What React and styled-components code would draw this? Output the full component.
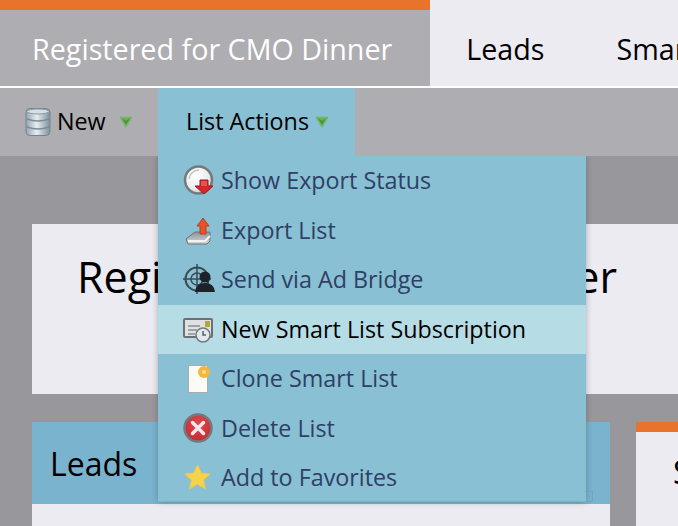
import React from "react";
import styled, { createGlobalStyle } from "styled-components";

const GlobalStyle = createGlobalStyle`
  html, body {
    margin: 0;
    padding: 0;
    background: #98979b;
  }
  * {
    box-sizing: border-box;
  }
`;

const Page = styled.div`
  position: relative;
  width: 678px;
  height: 526px;
  overflow: hidden;
  background: #98979b;
  font-family: "Open Sans", "Noto Sans", sans-serif;
  color: #000;
`;

const TabBar = styled.div`
  display: flex;
  height: 88px;
  background: #ecebf2;
  border-bottom: 2px solid #fff;
  white-space: nowrap;
`;

const Tab = styled.div`
  flex: none;
  height: 86px;
  display: flex;
  align-items: center;
  font-size: 28.7px;
  padding: ${(p) => (p.$active ? "0 38px 0 32px" : "0 36px")};
  background: ${(p) => (p.$active ? "#aeadb1" : "transparent")};
  border-top: 10px solid ${(p) => (p.$active ? "#e8732a" : "transparent")};
  color: ${(p) => (p.$active ? "#fff" : "#000")};
`;

const Toolbar = styled.div`
  display: flex;
  height: 68px;
  background: #aeadb1;
`;

const ToolButton = styled.div`
  display: flex;
  align-items: center;
  height: 68px;
  font-size: 23.3px;
  width: ${(p) => p.$width}px;
  padding-left: ${(p) => p.$pad}px;
  background: ${(p) => (p.$open ? "#89c0d3" : "transparent")};
`;

const ToolLabel = styled.span`
  margin-left: ${(p) => p.$left || 0}px;
  margin-right: ${(p) => p.$right}px;
  position: relative;
  top: -1px;
`;

const Content = styled.div`
  padding: 68px 0 0 32px;
`;

const HeaderCard = styled.div`
  height: 170px;
  background: #ecebf2;
  padding: 22px 0 0 45px;
  font-size: 43px;
  line-height: 62px;
  white-space: nowrap;
`;

const PanelRow = styled.div`
  display: flex;
  gap: 26px;
  margin-top: 28px;
`;

const LeadsPanel = styled.div`
  flex: none;
  width: 578px;
  height: 110px;
  background: #ecebf2;
`;

const LeadsHead = styled.div`
  height: 82px;
  background: #7ab3ce;
  padding-left: 18px;
  display: flex;
  align-items: center;
  font-size: 32px;
`;

const SidePanel = styled.div`
  flex: 1;
  min-width: 0;
  height: 110px;
  background: #ecebf2;
  border-top: 10px solid #e8732a;
  padding: 18px 0 0 37px;
  font-size: 32px;
  white-space: nowrap;
  overflow: hidden;
`;

const Menu = styled.div`
  position: absolute;
  left: 158px;
  top: 156px;
  width: 428px;
  height: 346px;
  background: #89c0d3;
  border-bottom: 1px solid #7eb2c8;
  box-shadow: 0 0 6px rgba(40, 50, 60, 0.35);
  clip-path: inset(0 -10px -10px -10px);

  &::after {
    content: "";
    position: absolute;
    right: -7px;
    bottom: -1px;
    width: 7px;
    height: 9px;
    border: 1px solid rgba(110, 160, 190, 0.8);
    border-left: 0;
  }
`;

const MenuItem = styled.div`
  display: flex;
  align-items: center;
  height: 49.5px;
  padding: 0 0 1px 25px;
  font-size: 23.3px;
  color: ${(p) => (p.$hover ? "#000" : "#2f3f66")};
  background: ${(p) => (p.$hover ? "#b6dde5" : "transparent")};
`;

const IconSlot = styled.span`
  flex: none;
  display: flex;
  width: 32px;
  height: 32px;
  margin: 2px 6px 0 0;
`;

const Arrow = () => (
  <svg width="14" height="12" viewBox="0 0 14 12">
    <path d="M1.500 1.500h11L7 10.500z" fill="#4a9636" stroke="#74b565" strokeWidth="1.500" strokeLinejoin="round" />
    <path d="M3 2h8L7 5z" fill="#6db05c" />
  </svg>
);

const DatabaseIcon = () => (
  <svg width="26" height="30" viewBox="0 0 26 30">
    <defs>
      <linearGradient id="db" x1="0" x2="1" y1="0" y2="0">
        <stop offset="0" stopColor="#93a4b0" />
        <stop offset="0.45" stopColor="#e6edf1" />
        <stop offset="1" stopColor="#7d8f9c" />
      </linearGradient>
    </defs>
    <rect x="1" y="1.500" width="24" height="27" rx="4" fill="url(#db)" stroke="#75848f" />
    <ellipse cx="13" cy="4.500" rx="11" ry="2.500" fill="#d6dfe4" stroke="#8a98a2" />
    <path d="M2 12q11 4 22 0M2 20q11 4 22 0" fill="none" stroke="#7d8b96" strokeWidth="1.500" />
  </svg>
);

const ExportStatusIcon = () => (
  <svg width="32" height="32" viewBox="0 0 32 32">
    <defs>
      <radialGradient id="disc" cx="0.4" cy="0.35" r="0.7">
        <stop offset="0" stopColor="#ffffff" />
        <stop offset="0.7" stopColor="#ececec" />
        <stop offset="1" stopColor="#b9bbbd" />
      </radialGradient>
    </defs>
    <circle cx="15.500" cy="15" r="13.500" fill="url(#disc)" stroke="#77797c" strokeWidth="2.500" />
    <path d="M6 14a10 10 0 0 1 10-9" fill="none" stroke="#c2c2c2" strokeWidth="1.500" />
    <path d="M17 15h8v6h5l-9 8-9-8h5z" fill="#d5272c" stroke="#a01a1e" strokeLinejoin="round" />
    <path d="M18 16h6v5h-6z" fill="#e9524f" />
  </svg>
);

const ExportListIcon = () => (
  <svg width="32" height="32" viewBox="0 0 32 32">
    <defs>
      <linearGradient id="tray" x1="0" x2="0" y1="0" y2="1">
        <stop offset="0" stopColor="#8c9297" />
        <stop offset="1" stopColor="#d6d9db" />
      </linearGradient>
    </defs>
    <path d="M3 24l9-7h15v9l-3 3H5z" fill="url(#tray)" stroke="#6f7478" />
    <path d="M5 26h17l5-5" fill="none" stroke="#f2f2f2" strokeWidth="2" />
    <path d="M20 3l6 8h-3v8h-6v-8h-3z" fill="#e8522b" stroke="#bb3f1d" strokeLinejoin="round" />
  </svg>
);

const AdBridgeIcon = () => (
  <svg width="32" height="32" viewBox="0 0 32 32">
    <circle cx="14" cy="15" r="11.500" fill="none" stroke="#3a4a50" strokeWidth="2" />
    <circle cx="14" cy="15" r="6" fill="none" stroke="#3a4a50" strokeWidth="1.500" />
    <path d="M14 0v30M0 15h28" stroke="#3a4a50" strokeWidth="1.500" />
    <circle cx="22" cy="13" r="5.500" fill="#1c2228" />
    <path d="M12 28q1-9 10-9t10 9z" fill="#1c2228" />
  </svg>
);

const SubscriptionIcon = () => (
  <svg width="32" height="32" viewBox="0 0 32 32">
    <rect x="1" y="5" width="28" height="18" rx="1" fill="#dfe1e2" stroke="#6d6f72" strokeWidth="2" />
    <rect x="22" y="7" width="5" height="6" fill="#b3a83f" />
    <path d="M5 12h12M5 16h9M5 20h7" stroke="#8d9093" strokeWidth="1.500" />
    <circle cx="20" cy="21" r="7" fill="#e2e8ec" stroke="#6f7a82" strokeWidth="1.500" />
    <path d="M20 17v4h3" fill="none" stroke="#56616a" strokeWidth="1.500" />
  </svg>
);

const CloneIcon = () => (
  <svg width="32" height="32" viewBox="0 0 32 32">
    <rect x="5.500" y="2.500" width="19" height="27" fill="#fbfbf6" stroke="#a9adae" />
    <circle cx="21" cy="9" r="6" fill="#f3b73d" />
    <circle cx="21" cy="9" r="2" fill="#f8dc94" />
  </svg>
);

const DeleteIcon = () => (
  <svg width="32" height="32" viewBox="0 0 32 32">
    <defs>
      <radialGradient id="red" cx="0.5" cy="0.35" r="0.7">
        <stop offset="0" stopColor="#e4474c" />
        <stop offset="1" stopColor="#bf2a31" />
      </radialGradient>
    </defs>
    <circle cx="15" cy="15" r="13.500" fill="url(#red)" stroke="#76787b" strokeWidth="2.500" />
    <path d="M9.500 9.500l11 11M20.500 9.500l-11 11" stroke="#f5eaea" strokeWidth="3.500" strokeLinecap="round" />
  </svg>
);

const StarIcon = () => (
  <svg width="32" height="32" viewBox="0 0 32 32">
    <path d="M14.500 3l3.700 8 8.800 1-6.500 6 1.800 8.700-7.800-4.400-7.800 4.400 1.800-8.700-6.500-6 8.800-1z" fill="#f7d24c" stroke="#f2c93f" strokeLinejoin="round" />
  </svg>
);

const menuItems = [
  { label: "Show Export Status", Icon: ExportStatusIcon },
  { label: "Export List", Icon: ExportListIcon },
  { label: "Send via Ad Bridge", Icon: AdBridgeIcon },
  { label: "New Smart List Subscription", Icon: SubscriptionIcon, hover: true },
  { label: "Clone Smart List", Icon: CloneIcon },
  { label: "Delete List", Icon: DeleteIcon },
  { label: "Add to Favorites", Icon: StarIcon },
];

const App = () => {
  return (
    <React.Fragment>
      <GlobalStyle />
      <Page>
        <TabBar>
          <Tab $active>Registered for CMO Dinner</Tab>
          <Tab>Leads</Tab>
          <Tab>Smart List</Tab>
        </TabBar>
        <Toolbar>
          <ToolButton $width={158} $pad={25}>
            <DatabaseIcon />
            <ToolLabel $left={6} $right={13}>New</ToolLabel>
            <Arrow />
          </ToolButton>
          <ToolButton $width={197} $pad={28} $open>
            <ToolLabel $right={6}>List Actions</ToolLabel>
            <Arrow />
          </ToolButton>
        </Toolbar>
        <Content>
          <HeaderCard>Registered for CMO Dinner</HeaderCard>
          <PanelRow>
            <LeadsPanel>
              <LeadsHead>Leads</LeadsHead>
            </LeadsPanel>
            <SidePanel>Smart List</SidePanel>
          </PanelRow>
        </Content>
        <Menu>
          {menuItems.map((item) => (
            <MenuItem key={item.label} $hover={item.hover}>
              <IconSlot>
                <item.Icon />
              </IconSlot>
              {item.label}
            </MenuItem>
          ))}
        </Menu>
      </Page>
    </React.Fragment>
  );
};

export default App;
